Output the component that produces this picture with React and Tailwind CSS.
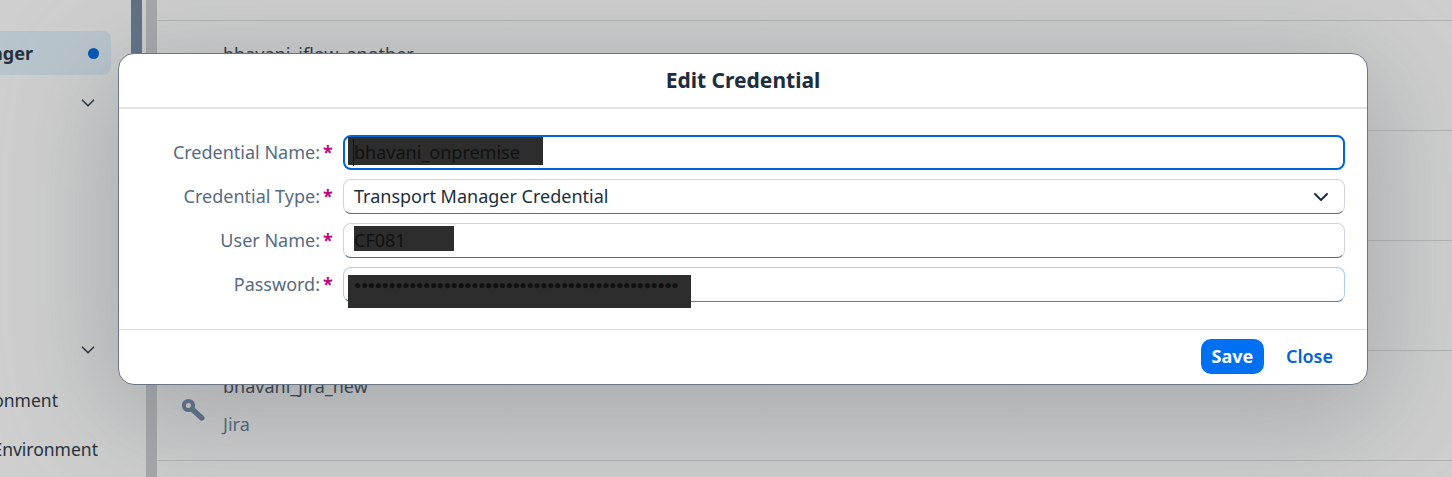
import React from 'react';
import { ChevronDown } from 'lucide-react';

const font = "font-['Noto_Sans',sans-serif]";

// Sidebar row with text scrolled off to the left
const NavText = ({ text, right }) => (
  <div className="h-[49px] flex items-center justify-end overflow-hidden whitespace-nowrap" style={{ paddingRight: right }}>
    <span className="text-[17.5px] text-[#27313d]">{text}</span>
  </div>
);

const NavChevron = () => (
  <div className="h-[54px] flex items-center justify-end pr-[32px] pt-[2px]">
    <ChevronDown size={22} strokeWidth={1.8} className="text-[#27313d]" />
  </div>
);

const ListRow = ({ title, sub, icon, top = 'pt-[22px]' }) => (
  <div className="h-[110px] border-b border-[#b1b2b3] flex">
    <div className="w-[66px] flex items-center justify-end pr-[18px] pt-[9px]">{icon}</div>
    <div className={top}>
      <div className="text-[18px] leading-[26px] text-[#27313d]">{title}</div>
      {sub && <div className="mt-[12px] text-[18px] leading-[26px] text-[#4f6278]">{sub}</div>}
    </div>
  </div>
);

const KeyIcon = () => (
  <svg width="24" height="24" viewBox="0 0 24 24" className="text-[#566b83]">
    <circle cx="7.5" cy="7.5" r="4.6" fill="none" stroke="currentColor" strokeWidth="4" />
    <path d="M11 11l9.8 9" fill="none" stroke="currentColor" strokeWidth="5.4" strokeLinecap="round" />
  </svg>
);

const Field = ({ label, box = 'border-[#cfd5dc] border-b-[#556b82]', children }) => (
  <div className="flex items-center h-[35px]">
    <div className="w-[224px] flex justify-end items-center text-[18px] text-[#556b82] shrink-0">
      <span>{label}:</span>
      <span className="w-[23px] pl-[3px] text-[#c0067f] font-bold text-[18px]">*</span>
    </div>
    <div className={`relative w-[1002px] h-[35px] border rounded-[8px] bg-white flex items-center pl-[10px] text-[18px] text-[#1d2d3e] ${box}`}>
      {children}
    </div>
  </div>
);

const Redact = ({ className }) => <div className={`absolute bg-[#2d2d2d] ${className}`} />;

export default function App() {
  return (
    <div className={`relative w-[1452px] h-[477px] overflow-hidden bg-[#cecfce] ${font}`}>
      <div className="flex h-full">
        {/* sidebar */}
        <div className="w-[131px] pt-[31px] shrink-0">
          <div className="h-[44px] w-[111px] bg-[#b9c5cd] rounded-r-[8px] flex items-center justify-between">
            <span className="w-[78px] overflow-hidden flex justify-end">
              <span className="text-[18px] font-bold text-[#27313d] whitespace-nowrap -translate-x-[45px]">Manager</span>
            </span>
            <span className="w-[11px] h-[11px] rounded-full bg-[#0057b8] mr-[12px]" />
          </div>
          <NavChevron />
          <div className="h-[193px]" />
          <NavChevron />
          <NavText text="Environment" right={73} />
          <NavText text="Transport Environment" right={33} />
        </div>
        <div className="w-[11px] h-[300px] bg-[#5f7186] shrink-0" />
        <div className="w-[4px] shrink-0" />
        <div className="w-[11px] bg-[#a5a8ab] shrink-0" />

        {/* list behind the dialog */}
        <div className="flex-1">
          <div className="h-[21px] border-b border-[#b1b2b3]" />
          <ListRow title="bhavani_iflow_another" top="pt-[20px]" />
          <ListRow />
          <ListRow />
          <ListRow title="bhavani_jira_new" sub="Jira" icon={<KeyIcon />} />
        </div>
      </div>

      {/* dialog */}
      <div className="absolute left-[118px] top-[53px] w-[1250px] h-[332px] bg-white border border-[#6a7585] rounded-[16px] flex flex-col shadow-[0_25px_110px_10px_rgba(110,115,125,0.42)]">
        <div className="h-[55px] border-b-2 border-[#e1e3e5] flex items-center justify-center text-[21px] font-bold text-[#1d2d3e]">
          Edit Credential
        </div>
        <div className="h-[220px] pt-[26px] flex flex-col gap-[9px]">
          <Field label="Credential Name" box="border-2 border-[#0064d9] !pl-[8px]">
            <Redact className="left-[3px] top-0 w-[195px] h-[28px]" />
            <span className="relative text-[#111] border-l border-[#111]">bhavani_onpremise</span>
          </Field>
          <Field label="Credential Type">
            <span>Transport Manager Credential</span>
            <ChevronDown size={24} strokeWidth={2} className="absolute right-[11px] top-[5px] text-[#1d2d3e]" />
          </Field>
          <Field label="User Name">
            <Redact className="left-[10px] top-[2px] w-[100px] h-[25px]" />
            <span className="relative text-[#111]">CF081</span>
          </Field>
          <Field label="Password" box="border-[#a9cdf7] border-b-[#3d83d9]">
            <Redact className="left-[4px] top-[7px] w-[343px] h-[33px]" />
            <span className="relative text-[#111] text-[12px] tracking-[-0.35px]">{'●'.repeat(47)}</span>
          </Field>
        </div>
        <div className="flex-1 border-t border-[#d9dbdd] flex items-center justify-end pr-[34px] pb-[2px] gap-[22px]">
          <button className="w-[63px] h-[35px] rounded-[10px] bg-[#0070f2] text-white font-bold text-[18px]">Save</button>
          <button className="text-[#0064d9] font-semibold text-[18px]">Close</button>
        </div>
      </div>
    </div>
  );
}
